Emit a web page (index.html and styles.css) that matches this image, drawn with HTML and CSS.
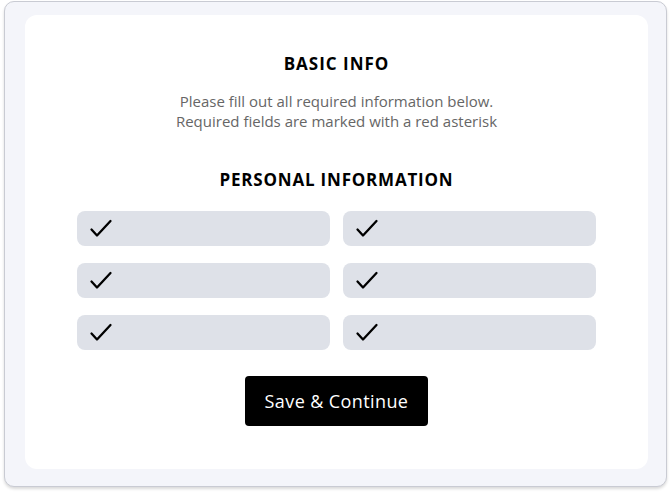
FILE: index.html
```html
<!DOCTYPE html>
<html lang="en">

<head>
    <meta charset="UTF-8">
    <title>Basic Info</title>
    <link rel="stylesheet" href="styles.css">
</head>

<body>
    <div class="frame">
        <div class="card">
            <h1 class="title">BASIC INFO</h1>
            <p class="intro">Please fill out all required information below.<br>Required fields are marked with a red asterisk</p>

            <h2 class="section-title">PERSONAL INFORMATION</h2>
            <div class="field-grid">
                <div class="field"><svg class="check" viewBox="0 0 24 24"><path d="M2.5 12.5L8 18.5L21.5 4"/></svg></div>
                <div class="field"><svg class="check" viewBox="0 0 24 24"><path d="M2.5 12.5L8 18.5L21.5 4"/></svg></div>
                <div class="field"><svg class="check" viewBox="0 0 24 24"><path d="M2.5 12.5L8 18.5L21.5 4"/></svg></div>
                <div class="field"><svg class="check" viewBox="0 0 24 24"><path d="M2.5 12.5L8 18.5L21.5 4"/></svg></div>
                <div class="field"><svg class="check" viewBox="0 0 24 24"><path d="M2.5 12.5L8 18.5L21.5 4"/></svg></div>
                <div class="field"><svg class="check" viewBox="0 0 24 24"><path d="M2.5 12.5L8 18.5L21.5 4"/></svg></div>
            </div>

            <div class="actions">
                <button class="submit-btn">Save &amp; Continue</button>
            </div>
        </div>
    </div>
</body>

</html>
```

FILE: styles.css
```css
body {
    font-family: "Open Sans", Arial, sans-serif;
    margin: 0;
    padding: 1px 5px 6px 4px;
    background-color: #fff;
}

.frame {
    height: 486px;
    box-sizing: border-box;
    border: 1px solid #c9cbd3;
    border-radius: 10px;
    background: #f4f5fa;
    padding: 13px 18px 17px 20px;
    box-shadow: 0 2px 3px rgba(0, 0, 0, 0.15);
}

.card {
    height: 100%;
    background: white;
    border-radius: 12px;
    padding: 0 52px;
    text-align: center;
    overflow: hidden;
}

.title {
    font-size: 17px;
    font-weight: 700;
    letter-spacing: 1px;
    color: #000;
    margin: 38px 0 0;
    line-height: 22px;
}

.intro {
    font-size: 15px;
    color: #666;
    line-height: 20px;
    margin: 16px 0 0;
}

.section-title {
    font-size: 17px;
    font-weight: 700;
    letter-spacing: 0.8px;
    color: #000;
    margin: 38px 0 0;
    line-height: 22px;
}

.field-grid {
    display: grid;
    grid-template-columns: 1fr 1fr;
    column-gap: 13px;
    row-gap: 17px;
    margin-top: 20px;
}

.field {
    height: 35px;
    background: #dee1e8;
    border-radius: 8px;
    display: flex;
    align-items: center;
    padding-left: 12px;
}

.check {
    width: 24px;
    height: 24px;
    fill: none;
    stroke: #000;
    stroke-width: 2.3;
    stroke-linecap: round;
    stroke-linejoin: round;
}

.actions {
    margin-top: 26px;
}

.submit-btn {
    background-color: #000;
    color: white;
    border: none;
    font-family: inherit;
    font-size: 18px;
    font-weight: 500;
    letter-spacing: 0.4px;
    width: 183px;
    height: 50px;
    border-radius: 4px;
    cursor: pointer;
}
```
